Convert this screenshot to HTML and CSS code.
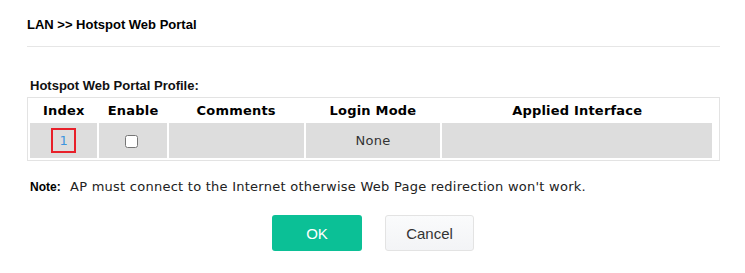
FILE: index.html
```html
<!DOCTYPE html>
<html lang="en">

<head>
    <meta charset="UTF-8">
    <meta name="viewport" content="width=device-width, initial-scale=1.0">
    <link rel="stylesheet" href="styles.css">
    <title>Hotspot Web Portal</title>
</head>

<body>
    <div class="page">
        <h1 class="title">LAN &gt;&gt; Hotspot Web Portal</h1>

        <div class="profile-label">Hotspot Web Portal Profile:</div>
        <div class="table-box">
            <table class="profile-table">
                <thead>
                    <tr>
                        <th class="col-index">Index</th>
                        <th class="col-enable">Enable</th>
                        <th class="col-comments">Comments</th>
                        <th class="col-mode">Login Mode</th>
                        <th class="col-iface">Applied Interface</th>
                    </tr>
                </thead>
                <tbody>
                    <tr>
                        <td><a class="index-link" href="#">1</a></td>
                        <td><input type="checkbox" class="enable-box"></td>
                        <td></td>
                        <td>None</td>
                        <td></td>
                    </tr>
                </tbody>
            </table>
        </div>

        <p class="note"><b>Note:</b> AP must connect to the Internet otherwise Web Page redirection won't work.</p>

        <div class="buttons">
            <button class="btn btn-ok">OK</button>
            <button class="btn btn-cancel">Cancel</button>
        </div>
    </div>
</body>

</html>
```

FILE: styles.css
```css
body {
    margin: 0;
    background-color: #fff;
    color: #000;
}

.page {
    padding: 0 25px 0 27px;
}

.title {
    margin: 0;
    padding: 17px 0 14px;
    font-family: "Liberation Sans", Arial, sans-serif;
    font-size: 13px;
    line-height: 15px;
    font-weight: bold;
    border-bottom: 1px solid #e6e6e6;
}

.profile-label {
    margin-top: 31px;
    padding-left: 3px;
    font-family: "Liberation Sans", Arial, sans-serif;
    font-size: 13px;
    line-height: 15px;
    font-weight: bold;
    color: #111;
}

.table-box {
    margin-top: 4px;
    border: 1px solid #e3e3e3;
    padding: 0 5px 0 0;
}

.profile-table {
    width: 100%;
    border-spacing: 2px;
    font-family: "DejaVu Sans", Verdana, sans-serif;
    font-size: 13px;
    letter-spacing: 0.2px;
}

.profile-table th {
    height: 21px;
    padding: 0;
    font-weight: bold;
    text-align: center;
    vertical-align: middle;
}

.profile-table td {
    height: 35px;
    padding: 0;
    background-color: #dddddd;
    text-align: center;
    vertical-align: middle;
    color: #333;
}

.col-index,
.col-enable {
    width: 10%;
}

.col-comments,
.col-mode {
    width: 20%;
}

.col-iface {
    width: 40%;
}

.index-link {
    display: inline-block;
    width: 21px;
    height: 21px;
    line-height: 21px;
    border: 2px solid #e8202a;
    color: #3d95de;
    text-decoration: none;
    vertical-align: middle;
}

.enable-box {
    width: 13px;
    height: 13px;
    margin: 0 3px 0 0;
    vertical-align: middle;
}

.note {
    margin: 18px 0 0 3px;
    font-family: "DejaVu Sans", Verdana, sans-serif;
    font-size: 13px;
    line-height: 16px;
    letter-spacing: 0.25px;
    color: #222;
}

.note b {
    font-family: "Liberation Sans", Arial, sans-serif;
    font-size: 12px;
    letter-spacing: 0;
    color: #000;
    margin-right: 5px;
}

.buttons {
    display: flex;
    justify-content: center;
    gap: 23px;
    margin-top: 20px;
    margin-left: -26px;
    margin-right: -25px;
}

.btn {
    width: 90px;
    height: 36px;
    border-radius: 3px;
    font-family: "Liberation Sans", Arial, sans-serif;
    font-size: 15px;
    cursor: pointer;
}

.btn-ok {
    background-color: #0bc096;
    color: #fff;
    border: none;
}

.btn-cancel {
    width: 89px;
    background: linear-gradient(#fafbfc, #f3f4f6);
    color: #333;
    border: 1px solid #e3e3e3;
}
```
